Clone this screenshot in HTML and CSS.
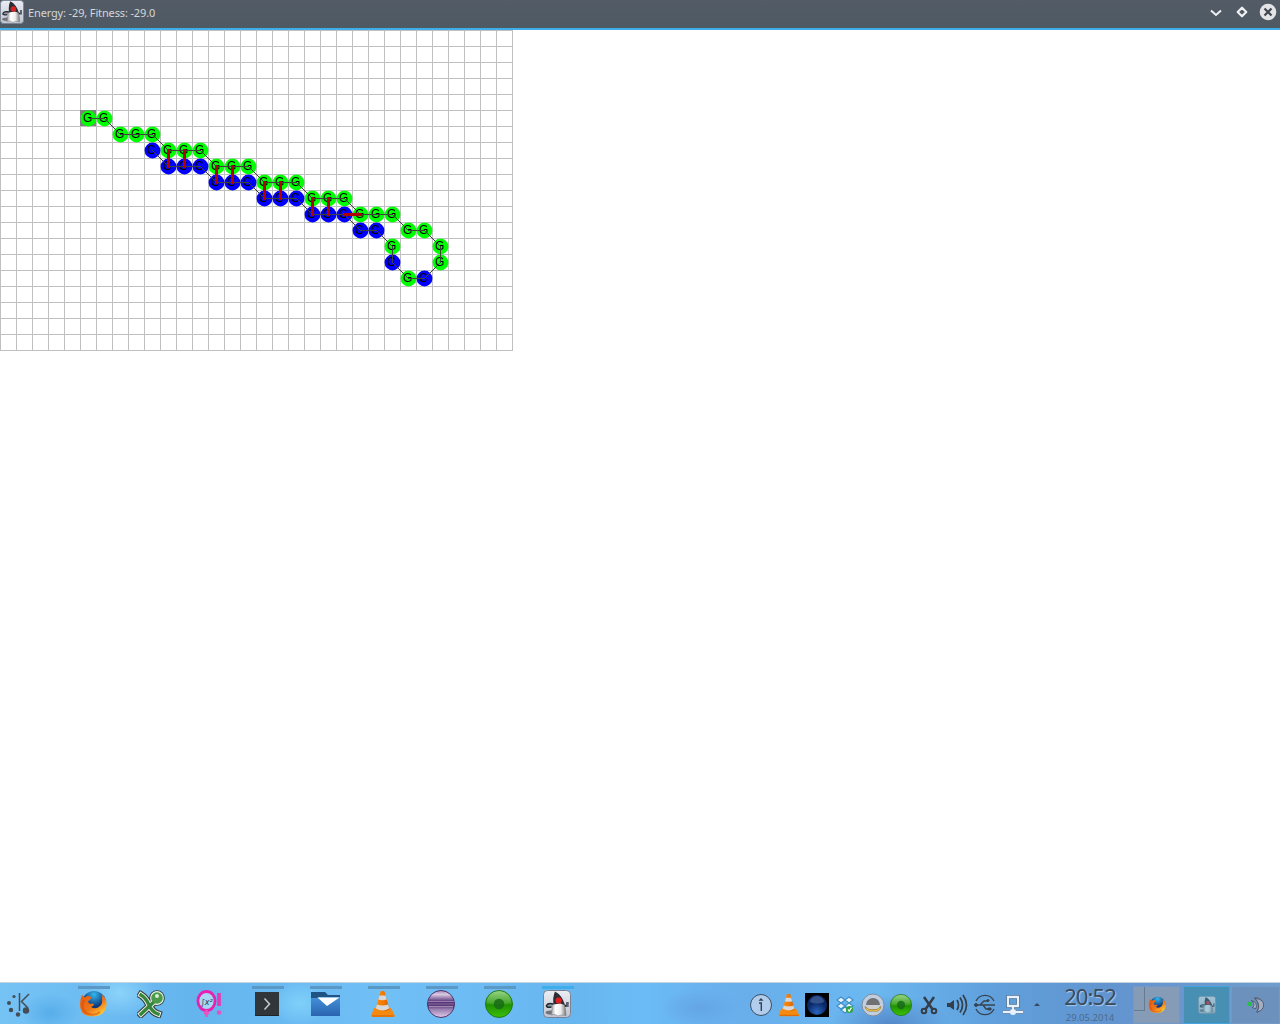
FILE: index.html
```html
<!DOCTYPE html>
<html lang="en">
<head>
<meta charset="utf-8">
<title>Energy: -29, Fitness: -29.0</title>
<link rel="stylesheet" href="styles.css">
</head>
<body>
<svg class="defs" aria-hidden="true">
  <defs>
    <linearGradient id="tile" x2="0" y2="1"><stop stop-color="#eceef5"/><stop offset="1" stop-color="#bfc3d1"/></linearGradient>
    <linearGradient id="body" x2="1" y2="0"><stop stop-color="#999"/><stop offset=".3" stop-color="#fff"/><stop offset=".65" stop-color="#eee"/><stop offset="1" stop-color="#777"/></linearGradient>
    <linearGradient id="greenG" x2="0" y2="1"><stop stop-color="#8fd07a"/><stop offset=".45" stop-color="#35a018"/><stop offset=".55" stop-color="#209400"/><stop offset="1" stop-color="#3cc008"/></linearGradient>
    <linearGradient id="purpleG" x2="0" y2="1"><stop stop-color="#a58bb8"/><stop offset=".15" stop-color="#d9c8e2"/><stop offset=".4" stop-color="#5d3a7d"/><stop offset=".52" stop-color="#4b2969"/><stop offset=".7" stop-color="#9a80b0"/><stop offset="1" stop-color="#e0cbea"/></linearGradient>
    <linearGradient id="folderG" x2="0" y2="1"><stop stop-color="#4591d9"/><stop offset="1" stop-color="#2a63b0"/></linearGradient>
    <linearGradient id="foxG" x2=".8" y2="1"><stop stop-color="#e35a12"/><stop offset=".6" stop-color="#ef7718"/><stop offset="1" stop-color="#ffd63c"/></linearGradient>
    <radialGradient id="globeG" cx=".5" cy=".15"><stop stop-color="#36b5ed"/><stop offset="1" stop-color="#0c397d"/></radialGradient>
    <radialGradient id="orbG" cx=".5" cy=".85"><stop stop-color="#2864bd"/><stop offset="1" stop-color="#0a2765"/></radialGradient>
    <linearGradient id="coneG" x2="1" y2="0"><stop stop-color="#ff8d0c"/><stop offset=".6" stop-color="#f07802"/><stop offset="1" stop-color="#d05800"/></linearGradient>
    <symbol id="duke" viewBox="0 0 28 28">
      <rect x=".5" y=".5" width="27" height="27" rx="4" fill="url(#tile)" stroke="#788291"/>
      <ellipse cx="8" cy="22.500" rx="5.500" ry="2" fill="#555" opacity=".75"/>
      <path d="M10.500 14Q5 12.500 3.500 15.500q-.5 2.500 5 1.500" fill="#8b96a3" stroke="#252a31" stroke-width="1.600"/>
      <path d="M21 15q3 3 3.500-3" fill="none" stroke="#252a31" stroke-width="1.800"/>
      <path d="M24.500 12v5" stroke="#59626d" stroke-width="2.400"/>
      <path d="M11.500 11Q9 17 8 25l4-.5 3 1.500 3-1 5 .5Q23 17 20 12z" fill="url(#body)" stroke="#777" stroke-width=".5"/>
      <path d="M12 1.500Q19 5 22 15l-5-1.500-6.500 1Q9.500 7 12 1.500z" fill="#2c2e32"/>
      <circle cx="15.600" cy="10.500" r="3.100" fill="#df2020"/>
    </symbol>
    <symbol id="firefox" viewBox="0 0 28 28">
      <circle cx="15" cy="13" r="12" fill="url(#globeG)"/>
      <path d="M3 5l3 2.500Q9 5 12 7q0 3-3 4 0 2 2 3 2-1 4 0 0 2-3 3 5 3 9-1 3-3 2-8 1-2-1-4 6 4 5.500 11-1 10.500-13 11.500Q1 27 1 14q0-5 2-9z" fill="url(#foxG)"/>
      <path d="M5 10q-4 8 2 13 8 4 14-1" fill="none" stroke="#d8420e" stroke-width="2" opacity=".5"/>
    </symbol>
    <symbol id="vlc" viewBox="0 0 28 28">
      <path d="M5 18h17l4 8q0 1-2 1H4q-2 0-2-1z" fill="#f58a10"/>
      <path d="M3 26h22" stroke="#d46004"/>
      <path d="M11.500 1.500q2-1.500 4 0l5 18q-7 4-14 0z" fill="url(#coneG)"/>
      <path d="M10.500 5.500h6l1.200 4q-4.200 1.500-8.400 0zM8 14.500q5.500 2 11 0l1.200 4q-6.500 4-13.400 0z" fill="#d6d8da"/>
    </symbol>
    <symbol id="green" viewBox="0 0 28 28">
      <circle cx="14" cy="14" r="13.500" fill="url(#greenG)" stroke="#237a18"/>
      <path d="M2 13a12 12 0 0 1 24 0q-12 3-24 0z" fill="#fff" opacity=".1"/>
      <circle cx="14" cy="14" r="5.300" fill="#176b16" opacity=".85"/>
    </symbol>
  </defs>
</svg>
<header class="titlebar">
  <svg class="app-icon"><use href="#duke"/></svg>
  <span class="title">Energy: -29, Fitness: -29.0</span>
  <svg class="controls" viewBox="0 0 74 24">
    <path d="M6 10.500l5 4.500 5-4.500" fill="none" stroke="#eff0f1" stroke-width="2"/>
    <path d="M37 7.700l4.300 4.300-4.300 4.300-4.300-4.300z" fill="none" stroke="#eff0f1" stroke-width="2.200" stroke-linejoin="round"/>
    <circle cx="63" cy="12" r="8.300" fill="#e3e4e5"/>
    <path d="M59.500 8.500l7 7m0-7l-7 7" stroke="#3e464f" stroke-width="2.200"/>
  </svg>
</header>
<main class="canvas">
  <svg class="lattice" id="lattice" width="513" height="321" viewBox="0 0 513 321"></svg>
</main>
<footer class="panel">
  <div class="launcher"><svg width="24" height="28" viewBox="0 0 24 28" fill="#454d56">
    <path d="M12.500 4v18M22 5l-7.500 7.500L21 19" fill="none" stroke="#454d56" stroke-width="1.500"/>
    <circle cx="7" cy="7.500" r="1.600"/><circle cx="2" cy="14" r="2"/><circle cx="4" cy="21" r="2.200"/><circle cx="11" cy="25.500" r="2.200"/><circle cx="19" cy="21.500" r="3.200"/>
  </svg></div>
  <nav class="tasks">
    <div class="task open"><svg><use href="#firefox"/></svg></div>
    <div class="task"><svg viewBox="0 0 28 28">
      <g fill="none" stroke-linecap="square"><path d="M4 5q5 3 8 10t9 9M4 24l15-14" stroke="#303b35" stroke-width="7.400"/><circle cx="20" cy="8" r="7.800" fill="#303b35"/><path d="M4 5q5 3 8 10t9 9M4 24l15-14" stroke="#e9f2e7" stroke-width="5.400"/><circle cx="20" cy="8" r="6.900" fill="#e9f2e7"/><path d="M4 5q5 3 8 10t9 9M4 24l15-14" stroke="#37843c" stroke-width="3.400"/></g>
      <circle cx="20" cy="8" r="5.800" fill="#4b9b4a"/><circle cx="20" cy="6" r="2" fill="#d9efd3"/>
    </svg></div>
    <div class="task"><svg viewBox="0 0 28 28">
      <ellipse cx="11.500" cy="11" rx="8.600" ry="9.500" fill="#a7d7f5" stroke="#e622b3" stroke-width="2.800"/>
      <path d="M11.500 20v7M9 23h5" stroke="#ea55bd" stroke-width="2.500"/><path d="M24 3v13" stroke="#ea35b5" stroke-width="3.600"/><circle cx="24" cy="22.500" r="2.200" fill="#e94fbd"/>
      <text x="5.500" y="14.500" class="formula">∫x²</text>
    </svg></div>
    <div class="task open"><svg viewBox="0 0 28 28"><rect x="2" y="2" width="24" height="24" fill="#31363b"/><path d="M2 25.500h24" stroke="#20242a"/><path d="M11.500 8.500l5 5.500-5 5.500" fill="none" stroke="#c7cbcc" stroke-width="1.500"/></svg></div>
    <div class="task open"><svg class="folder" viewBox="0 0 30 28"><path d="M1 2h14l3 3h12v8H1z" fill="#205383"/><path d="M1 8h6l2-1h21v19H1z" fill="url(#folderG)"/><path d="M7.500 7.500h22L17 16z" fill="#fff"/></svg></div>
    <div class="task open"><svg><use href="#vlc"/></svg></div>
    <div class="task open"><svg viewBox="0 0 28 28"><circle cx="14" cy="14" r="13.500" fill="url(#purpleG)" stroke="#4d336d"/><path d="M1 11.500h26M1 14h26M2 16.500h24" stroke="#d6c5e2" stroke-width=".5"/></svg></div>
    <div class="task open"><svg><use href="#green"/></svg></div>
    <div class="task open active"><svg><use href="#duke"/></svg></div>
  </nav>
  <div class="tray">
    <svg viewBox="0 0 24 24"><circle cx="12" cy="12" r="10.500" fill="#b1ccec" stroke="#3d4e61"/><path d="M10 10h2.300v8" fill="none" stroke="#34404d" stroke-width="1.400"/><path d="M9.500 7.800l2.500-2.800 2.500 2.800z" fill="#34404d"/></svg>
    <svg class="cone"><use href="#vlc"/></svg>
    <svg viewBox="0 0 24 24"><path d="M0 0h24v24H0z"/><circle cx="12" cy="12" r="10" fill="url(#orbG)"/><path d="M5 9a7 6 0 0 1 14 0q-7 3-14 0z" fill="#7193c5" opacity=".4"/></svg>
    <svg viewBox="0 0 24 24"><path d="M8 4l4 3-4 3-4-3zm8 0l4 3-4 3-4-3zM8 10l4 3-4 3-4-3zm8 0l4 3-4 3-4-3zm-4 4l4 3-4 3-4-3z" fill="#e9f6ff" stroke="#3f8fc9" stroke-width="1.200"/><circle cx="16.500" cy="16.500" r="3.600" fill="#2fa33c"/><path d="M15 16.500l1.200 1.700 2.300-3.500" fill="none" stroke="#fff" stroke-width="1.200"/></svg>
    <svg viewBox="0 0 24 24"><circle cx="12" cy="12" r="11" fill="#c0cedf" stroke="#7d8c9c"/><path d="M5 12a7 7 0 0 1 14 0z" fill="#6f7174"/><path d="M6.500 12h11v4h-11z" fill="#cfd0cf"/><path d="M4 13.500q1 6 8 4.500 7 1.500 8-4.500l-4 3H8z" fill="#f4cf4a" stroke="#987332" stroke-width=".7"/></svg>
    <svg class="ball"><use href="#green"/></svg>
    <svg viewBox="0 0 24 24" fill="none" stroke="#333e49"><path d="M7 4l9 13M17 4L8 17" stroke-width="2.500"/><circle cx="7" cy="18" r="2.300" stroke-width="2"/><circle cx="17" cy="18" r="2.300" stroke-width="2"/></svg>
    <svg viewBox="0 0 24 24" fill="none" stroke="#333e49" stroke-width="1.700"><path d="M2 10h3l4-3v10l-4-3H2z" fill="#333e49" stroke="none"/><path d="M12 7q3 5 0 10M15 4.500q5 7.500 0 15M18 2q7 10 0 20"/></svg>
    <svg viewBox="0 0 24 24" fill="none" stroke="#354553"><path d="M3 8a10 10 0 0 1 18 0M3 16a10 10 0 0 0 18 0" stroke-width="1.300"/><path d="M2 12h20M7 12l4-4h4M10 12l3 4h3" stroke-width="1.400"/><circle cx="3" cy="12" r="1.500" fill="#354553"/><circle cx="15" cy="7.500" r="1" fill="#354553"/><path d="M15 15h3v2h-3z" fill="#354553"/></svg>
    <svg viewBox="0 0 24 24" fill="none"><g stroke="#46627e" stroke-width="3.600"><path d="M7 4h10v9H7zM12 13v6M2 19h20"/></g><g stroke="#e8f2fc" stroke-width="2.300"><path d="M7 4h10v9H7zM12 13v6M2 19h20"/></g><circle cx="12" cy="19" r="3" fill="#e8f2fc"/></svg>
    <svg class="more" viewBox="0 0 8 8"><path d="M1 5L4 2l3 3z" fill="#34485d"/></svg>
  </div>
  <div class="clock"><time class="time">20:52</time><time class="date">29.05.2014</time></div>
  <div class="pager">
    <div class="desk first"><i class="mini"></i><svg><use href="#firefox"/></svg></div>
    <div class="desk current"><svg><use href="#duke"/></svg></div>
    <div class="desk last"><svg viewBox="0 0 20 20"><path d="M8 2a8 8 0 0 1 3 16q5-8-3-16z" fill="#c3cbd8" stroke="#515c73"/><path d="M9 2.500Q21 4 18 13q-2 4-7 5 5-8-2-15.500z" fill="#a4afc4" stroke="#4b566b"/><path d="M5 5q7 2 5 9l-4-1q4-3-1-8z" fill="#b1bacb" stroke="#4b566b"/><circle cx="3" cy="9" r="2.500" fill="#26bd48"/></svg></div>
  </div>
</footer>
<script src="lattice.js"></script>
</body>
</html>
```
FILE: styles.css
```css
* { box-sizing: border-box; }
body { margin: 0; width: 1280px; height: 1024px; overflow: hidden; display: flex; flex-direction: column; background: #fff; font-family: "Noto Sans", sans-serif; }
svg { display: block; flex: none; }
.defs { position: absolute; width: 0; height: 0; }
.titlebar { height: 30px; flex: none; display: flex; align-items: flex-start; background: linear-gradient(#535c66, #4f5963); border-bottom: 2px solid #3daee9; color: #d3d7da; }
.app-icon { width: 24px; height: 24px; }
.title { margin-left: 4px; flex: 1; font-size: 11px; line-height: 26px; letter-spacing: -0.14px; }
.controls { width: 74px; height: 24px; margin-right: 1px; }
.canvas { flex: 1; }
.grid { stroke: #c0c0c0; fill: none; shape-rendering: crispEdges; }
.start { fill: #808080; }
.guanine { fill: #00ff00; }
.cytosine { fill: #0000ff; }
.letter { font: 12px "Liberation Sans", sans-serif; fill: #000; }
.chain { fill: none; stroke: #404040; shape-rendering: crispEdges; }
.bond { stroke: #b00000; stroke-width: 3; stroke-linecap: square; }

.panel { height: 42px; flex: none; display: flex; border-top: 1px solid #c7d3df; background:
  radial-gradient(ellipse 30px 20px at 50px 30px, #58aeea 0, transparent 100%),
  radial-gradient(ellipse 35px 24px at 120px 10px, #8bd3fa 0, transparent 100%),
  radial-gradient(ellipse 30px 22px at 300px 20px, #80d0fa 0, transparent 100%),
  radial-gradient(ellipse 40px 20px at 700px 25px, #64a5e5 0, transparent 100%),
  radial-gradient(ellipse 60px 30px at 890px 42px, #5488c9 0, transparent 100%),
  linear-gradient(90deg, #75c3f5, #64b4ee 15%, #70c0f6 30%, #68b6f0 45%, #6bbcf6 50%, #68aeeb 58%, #6bb8f1 68%, #609fdb 78%, #6294cf 87%, #709dce); }
.launcher { width: 65px; padding: 6px 0 0 7px; }
.tasks { display: flex; width: 682px; }
.task { width: 58px; padding-top: 3px; display: flex; flex-direction: column; align-items: center; gap: 1px; }
.task::before { content: ""; width: 32px; height: 3px; }
.task.open::before { background: #5a98c6; }
.task.active::before { background: #3daee9; }
.task svg { width: 28px; height: 28px; margin: 0 2px 0 0; }
.task .folder { width: 30px; }
.formula { font: italic 8px "DejaVu Sans", sans-serif; fill: #263c50; }
.tray { display: flex; align-items: center; width: 301px; gap: 4px; padding: 3px 0 0 2px; }
.tray svg { width: 24px; height: 24px; }
.tray .ball { padding: 1px; }
.tray .more { width: 8px; height: 8px; margin-left: 4px; }
.clock { width: 84px; display: flex; flex-direction: column; align-items: center; color: #3c4b5b; }
.time { font-size: 22px; line-height: 27px; letter-spacing: -0.9px; text-shadow: 1px 1px 1px #a9caed; }
.date { margin-top: 1px; font-size: 9.5px; line-height: 13px; color: #4d6b8b; }
.pager { display: flex; gap: 3px; padding: 3px 0 0 1px; }
.desk { position: relative; width: 47px; height: 38px; display: flex; align-items: center; justify-content: center; border: 1px solid #719acb; background: #859bb6; }
.desk svg { width: 18px; height: 18px; }
.desk.current { background: #4790b4; border-color: #42a4e1; }
.desk.current svg { opacity: .55; }
.desk.last { background: #6d91bd; margin-left: -2px; width: 49px; }
.mini { position: absolute; left: 0; top: 0; width: 11px; height: 24px; border: solid #687a8f; border-width: 0 1px 1px 0; }
```
FILE: lattice.js
```js
const svg = document.getElementById('lattice');
const CELL = 16;
const sequence = 'GGGGGGGGGGGGGGGGGGGGGGGGCGCGCCCCCCCCCCCCCCC';
const cells = [
  [5,5],[6,5],[7,6],[8,6],[9,6],[10,7],[11,7],[12,7],[13,8],[14,8],[15,8],
  [16,9],[17,9],[18,9],[19,10],[20,10],[21,10],[22,11],[23,11],[24,11],
  [25,12],[26,12],[27,13],[27,14],[26,15],[25,15],[24,14],[24,13],
  [23,12],[22,12],[21,11],[20,11],[19,11],[18,10],[17,10],[16,10],
  [15,9],[14,9],[13,9],[12,8],[11,8],[10,8],[9,7]
];
const bonds = [
  [10,7,10,8],[11,7,11,8],[13,8,13,9],[14,8,14,9],[16,9,16,10],[17,9,17,10],
  [19,10,19,11],[20,10,20,11],[21,11,22,11]
];
const mid = n => n * CELL + 8.5;
let grid = '';
for (let x = 0; x <= 512; x += CELL) grid += `M${x + 0.5} 0V321`;
for (let y = 0; y <= 320; y += CELL) grid += `M0 ${y + 0.5}H513`;
let out = `<path class="grid" d="${grid}"/><rect class="start" x="80" y="80" width="16" height="16"/>`;
cells.forEach(([x, y], i) => {
  const kind = sequence[i] === 'G' ? 'guanine' : 'cytosine';
  out += `<circle class="${kind}" cx="${mid(x)}" cy="${mid(y)}" r="7.9"/>`;
  out += `<text class="letter" x="${mid(x) - 5.5}" y="${mid(y) + 3.5}">${sequence[i]}</text>`;
});
out += `<polyline class="chain" points="${cells.map(([x, y]) => mid(x) + ',' + mid(y)).join(' ')}"/>`;
bonds.forEach(([a, b, c, d]) => {
  out += `<line class="bond" x1="${mid(a)}" y1="${mid(b)}" x2="${mid(c)}" y2="${mid(d)}"/>`;
});
svg.innerHTML = out;
```
